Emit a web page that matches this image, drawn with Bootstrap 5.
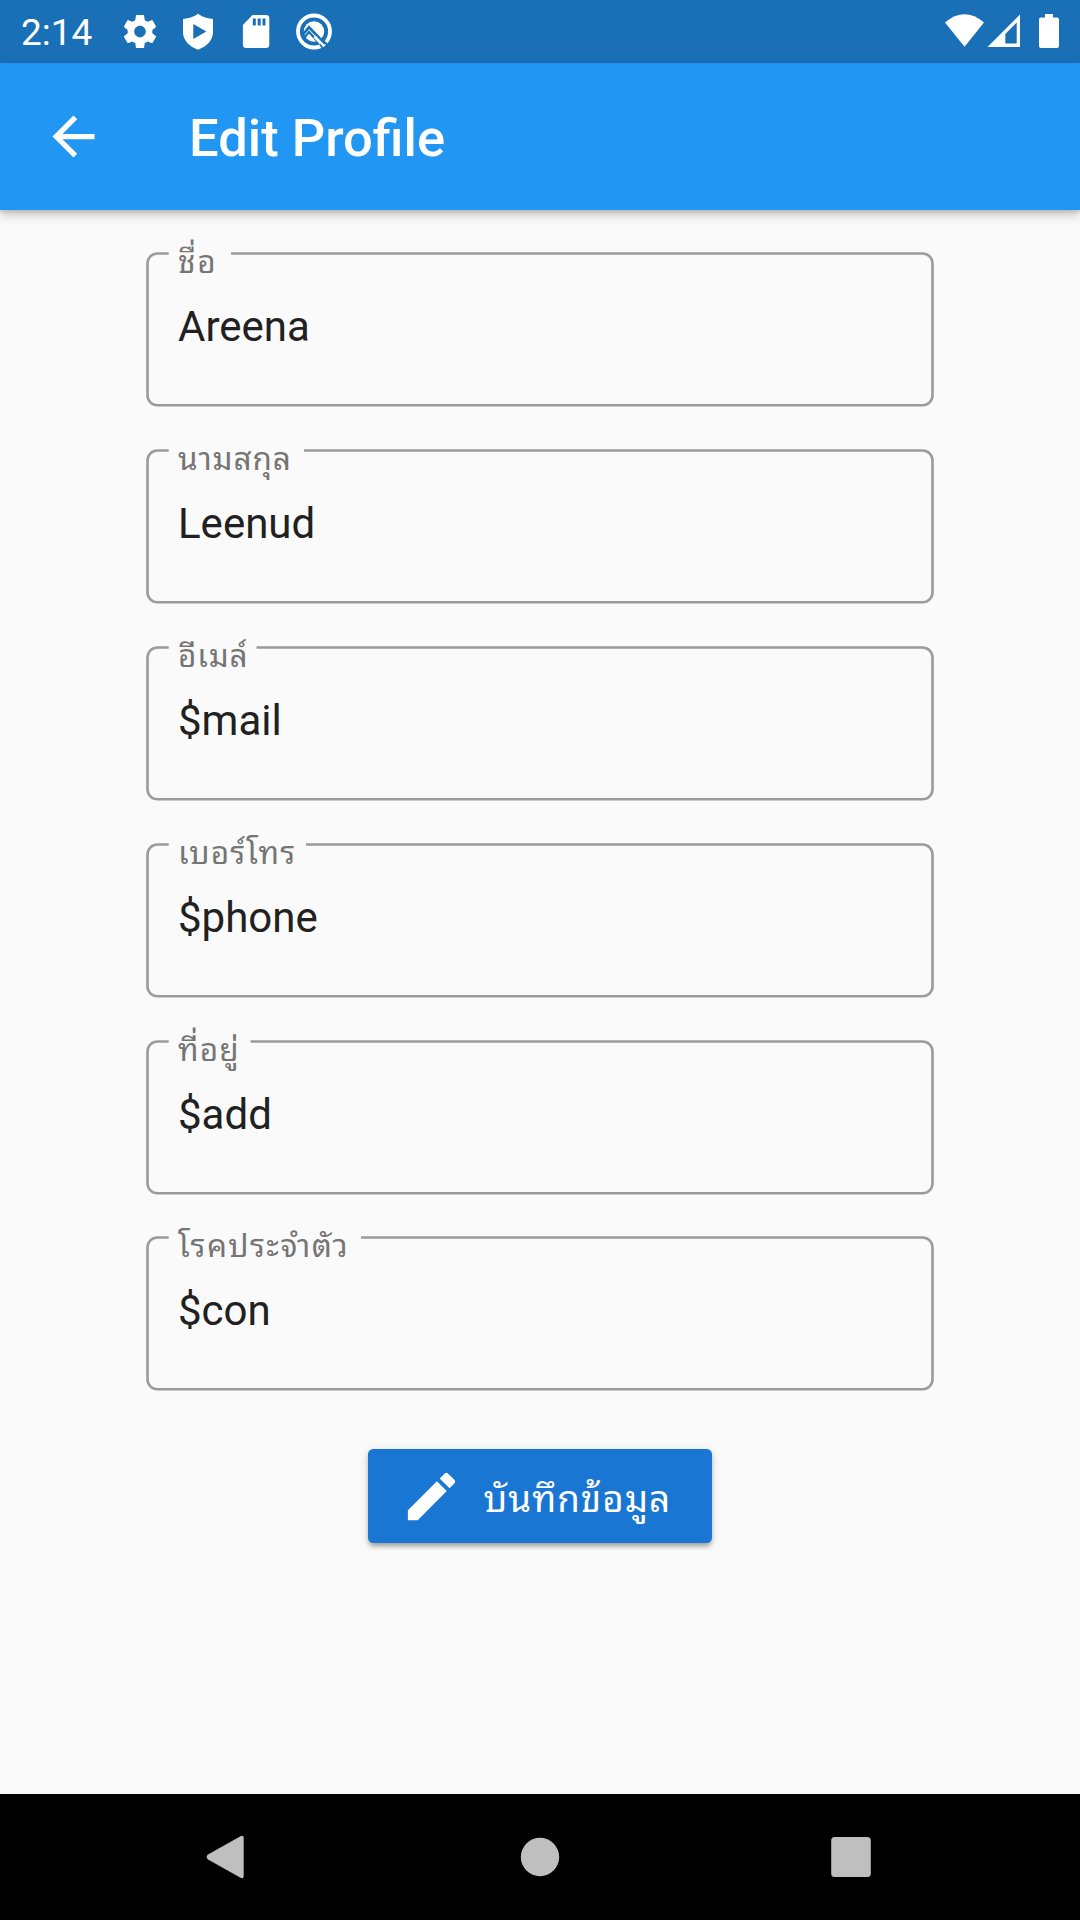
<!DOCTYPE html>
<html lang="th">
<head>
<meta charset="utf-8">
<meta name="viewport" content="width=device-width, initial-scale=1">
<title>Edit Profile</title>
<link href="https://cdn.jsdelivr.net/npm/bootstrap@5.3.0/dist/css/bootstrap.min.css" rel="stylesheet">
<style>
body{font-family:Roboto,"Noto Sans Thai Looped","Noto Looped Thai",Loma,Waree,Garuda,"Droid Sans Thai","Noto Sans Thai","Noto Sans",sans-serif;background:#fafafa;width:1080px;height:1920px;overflow:hidden}
svg{display:block;flex:none}
.status-bar{height:63px;background:#1970b6;padding:0 18px 0 21px}
.clock{font-size:37px;line-height:63px;width:101px;padding-top:2px}
.app-bar{height:147px;background:#2196f3;box-shadow:0 5px 10px rgba(0,0,0,.2),0 2px 4px rgba(0,0,0,.12);z-index:1;padding-left:42px}
.app-title{font-size:52.5px;font-weight:500;line-height:62px;margin:2px 0 0 84px}
.profile-form{padding:41px 145px 0 145px}
.field{display:grid;height:196.875px}
.field>*{grid-area:1/1}
.outline{fill:none;stroke:#000;stroke-opacity:.38;stroke-width:2.625}
.field-text{padding-left:33px}
.field-label{display:block;font-size:31.5px;line-height:40px;height:40px;color:#757575;white-space:nowrap;margin-top:-8px}
.field-value{display:block;border:0;background:none;padding:0;outline:0;font-size:42px;line-height:50px;height:50px;color:#212121;margin-top:19px;width:700px}
.save-btn{width:344px;height:94.5px;margin-top:16.500px;border-radius:5.25px;background:#1976d2;padding:0 0 0 31.500px;box-shadow:0 5px 5px -2px rgba(0,0,0,.2),0 3px 5px rgba(0,0,0,.16),0 1px 10px rgba(0,0,0,.1);border:0}
.save-text{font-size:36.75px;line-height:50px;margin:8px 0 0 21px;white-space:nowrap;letter-spacing:1px}
.sp-a{letter-spacing:1.800px}
.sp-b{letter-spacing:.850px}
.sp-c{letter-spacing:1.400px}
.sp-d{letter-spacing:1.150px}
.nav-keys{height:126px;background:#000;fill:#bfbfbf}
</style>
</head>
<body class="d-flex flex-column">
<header class="status-bar d-flex align-items-center text-white flex-shrink-0">
  <span class="clock">2:14</span>
  <svg width="300" height="63" viewBox="122 0 300 63" fill="#fff">
    <path transform="translate(120.2 11.8) scale(1.65)" d="M19.43 12.98c.04-.32.07-.64.07-.98s-.03-.66-.07-.98l2.11-1.65c.19-.15.24-.42.12-.64l-2-3.46c-.12-.22-.39-.3-.61-.22l-2.49 1c-.52-.4-1.08-.73-1.69-.98l-.38-2.65C14.46 2.18 14.25 2 14 2h-4c-.25 0-.46.18-.49.42l-.38 2.65c-.61.25-1.17.59-1.69.98l-2.49-1c-.23-.09-.49 0-.61.22l-2 3.46c-.13.22-.07.49.12.64l2.11 1.65c-.04.32-.07.65-.07.98s.03.66.07.98l-2.11 1.65c-.19.15-.24.42-.12.64l2 3.46c.12.22.39.3.61.22l2.49-1c.52.4 1.08.73 1.69.98l.38 2.65c.03.24.24.42.49.42h4c.25 0 .46-.18.49-.42l.38-2.65c.61-.25 1.17-.59 1.69-.98l2.49 1c.23.09.49 0 .61-.22l2-3.46c.12-.22.07-.49-.12-.64l-2.11-1.65zM12 15.5c-1.93 0-3.5-1.57-3.5-3.5s1.57-3.5 3.5-3.5 3.5 1.57 3.5 3.5-1.57 3.5-3.5 3.5z"/>
    <path fill-rule="evenodd" d="M198 13.7c4 3 8.500 4.300 15 5.300v13c0 8-6 14.500-15 17.700c-9-3.200-15-9.700-15-17.700V19c6.500-1 11-2.300 15-5.300zM193.300 24v15l13-7.500z"/>
    <path fill-rule="evenodd" d="M252.500 15H266a3.300 3.300 0 0 1 3.300 3.300V44.700a3.300 3.300 0 0 1-3.300 3.300H246.200a3.300 3.300 0 0 1-3.300-3.300V25zM252.800 18.500v7h3v-7zM257.700 18.500v7h3v-7zM262.500 18.500v7h3v-7z"/>
    <circle cx="314" cy="31.500" r="16" fill="none" stroke="#fff" stroke-width="3.800"/>
    <circle cx="314" cy="31.500" r="10.200"/>
    <path d="M302.500 35L309 27.300L325 43.800" fill="none" stroke="#1970b6" stroke-width="2.600"/>
    <path d="M303.500 38.500L309 32L319.500 43.500" fill="none" stroke="#1970b6" stroke-width="2.300"/>
    <path d="M314.500 36.500L324 46.500" fill="none" stroke="#fff" stroke-width="2.800"/>
    <path d="M319.800 44.200L324 49.500M323 40.500L328 45.500" fill="none" stroke="#1970b6" stroke-width="1.800"/>
  </svg>
  <svg class="ms-auto" width="120" height="63" viewBox="942 0 120 63" fill="#fff">
    <path d="M945 22.500Q964.500 6 984 22.500L964.500 46.700z"/>
    <path fill-rule="evenodd" d="M1020 14.500V47H987.500zM1016.700 22.500L1005.300 34V43.500H1016.700z"/>
    <path d="M1045 14h8v3.500h4a2 2 0 0 1 2 2V46a2 2 0 0 1-2 2h-16a2 2 0 0 1-2-2V19.500a2 2 0 0 1 2-2h4z"/>
  </svg>
</header>
<nav class="app-bar d-flex align-items-center text-white flex-shrink-0 position-relative">
  <svg width="63" height="63" viewBox="0 0 24 24" fill="#fff"><path d="M20 11H7.830l5.590-5.590L12 4l-8 8 8 8 1.410-1.410L7.830 13H20v-2z"/></svg>
  <h1 class="app-title">Edit Profile</h1>
</nav>
<main class="flex-grow-1">
  <form class="profile-form d-flex flex-column">
    <div class="field"><svg class="outline" width="790" height="160"><path d="M86 2.450H777.500a10 10 0 0 1 10 10V144.250a10 10 0 0 1-10 10H12.500a10 10 0 0 1-10-10V12.450a10 10 0 0 1 10-10H23.700"/></svg><div class="field-text"><label class="field-label sp-a" for="f1">ชื่อ</label><input class="field-value" id="f1" value="Areena"></div></div>
    <div class="field"><svg class="outline" width="790" height="160"><path d="M159 2.450H777.500a10 10 0 0 1 10 10V144.250a10 10 0 0 1-10 10H12.500a10 10 0 0 1-10-10V12.450a10 10 0 0 1 10-10H23.700"/></svg><div class="field-text"><label class="field-label sp-b" for="f2">นามสกุล</label><input class="field-value" id="f2" value="Leenud"></div></div>
    <div class="field"><svg class="outline" width="790" height="160"><path d="M111.500 2.450H777.500a10 10 0 0 1 10 10V144.250a10 10 0 0 1-10 10H12.500a10 10 0 0 1-10-10V12.450a10 10 0 0 1 10-10H23.700"/></svg><div class="field-text"><label class="field-label sp-b" for="f3">อีเมล์</label><input class="field-value" id="f3" value="$mail"></div></div>
    <div class="field"><svg class="outline" width="790" height="160"><path d="M161 2.450H777.500a10 10 0 0 1 10 10V144.250a10 10 0 0 1-10 10H12.500a10 10 0 0 1-10-10V12.450a10 10 0 0 1 10-10H23.700"/></svg><div class="field-text"><label class="field-label sp-d" for="f4">เบอร์โทร</label><input class="field-value" id="f4" value="$phone"></div></div>
    <div class="field"><svg class="outline" width="790" height="160"><path d="M105.500 2.450H777.500a10 10 0 0 1 10 10V144.250a10 10 0 0 1-10 10H12.500a10 10 0 0 1-10-10V12.450a10 10 0 0 1 10-10H23.700"/></svg><div class="field-text"><label class="field-label sp-d" for="f5">ที่อยู่</label><input class="field-value" id="f5" value="$add"></div></div>
    <div class="field"><svg class="outline" width="790" height="160"><path d="M216 2.450H777.500a10 10 0 0 1 10 10V144.250a10 10 0 0 1-10 10H12.500a10 10 0 0 1-10-10V12.450a10 10 0 0 1 10-10H23.700"/></svg><div class="field-text"><label class="field-label sp-c" for="f6">โรคประจำตัว</label><input class="field-value" id="f6" value="$con"></div></div>
    <button type="button" class="save-btn align-self-center d-flex align-items-center text-white">
      <svg width="63" height="63" viewBox="0 0 24 24" fill="#fff"><path d="M3 17.250V21h3.750L17.810 9.940l-3.750-3.750L3 17.250zM20.710 7.040c.39-.39.39-1.020 0-1.410l-2.340-2.340c-.39-.39-1.020-.39-1.410 0l-1.830 1.830 3.750 3.750 1.830-1.830z"/></svg>
      <span class="save-text">บันทึกข้อมูล</span>
    </button>
  </form>
</main>
<footer class="nav-keys flex-shrink-0">
  <svg width="1080" height="126" viewBox="0 1794 1080 126"><path d="M240.500 1836.200q3.200-1.500 3.200 1.800v38q0 3.300-3.200 1.800L208 1859.500q-2.800-2.500 0-5z"/><circle cx="540" cy="1857" r="19.200"/><rect x="831.200" y="1837" width="39.600" height="40" rx="3.500"/></svg>
</footer>
</body>
</html>
